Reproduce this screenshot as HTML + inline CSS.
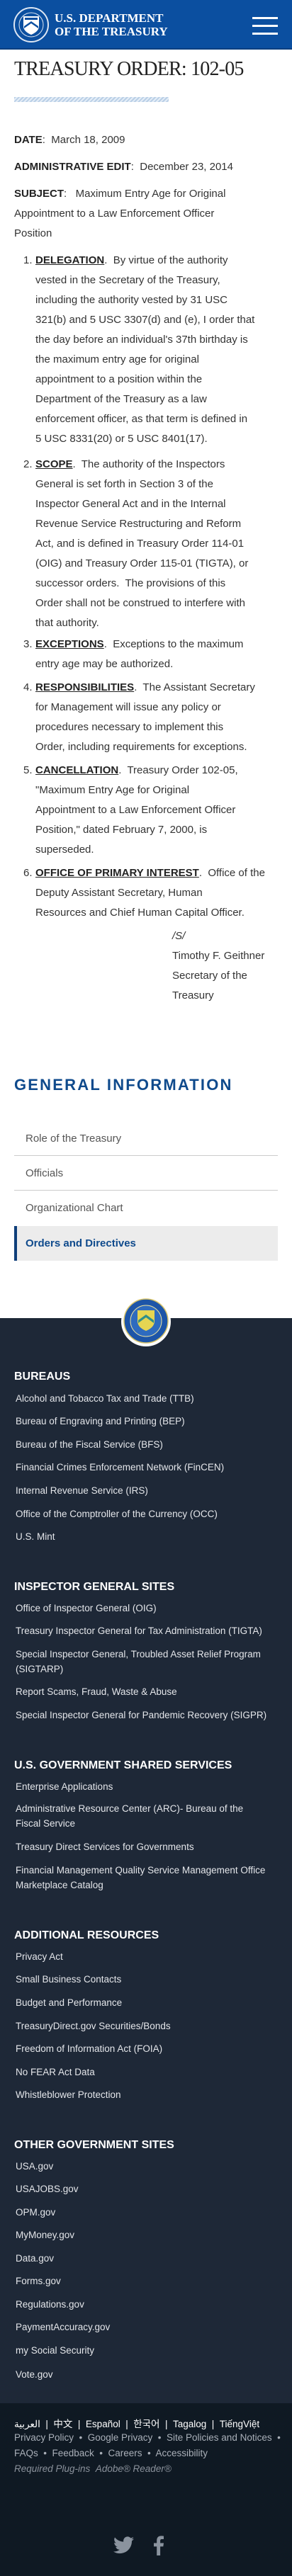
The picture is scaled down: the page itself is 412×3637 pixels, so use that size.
<!DOCTYPE html>
<html><head><meta charset="utf-8">
<style>
*{margin:0;padding:0;box-sizing:border-box}
body{width:412px;height:3637px;position:relative;background:#fff;font-family:"Liberation Sans",sans-serif;color:#333;overflow:hidden}
.abs{position:absolute}
#hdr{left:0;top:0;width:412px;height:70px;background:#0b4fa0;border-bottom:2px solid #0a3f80}
.ht{left:77px;font-family:"Liberation Serif",serif;font-weight:bold;color:#fff;font-size:17px;line-height:18px;white-space:nowrap}
.bar{left:356px;width:36px;height:3px;background:#fff}
h1{position:absolute;left:20px;top:82px;font-family:"Liberation Serif",serif;font-weight:normal;font-size:28px;color:#222;letter-spacing:-0.8px;white-space:nowrap}
.stripe{left:20px;top:137px;width:218px;height:7px;background:repeating-linear-gradient(135deg,#b9cfe6 0 2px,#e4edf7 2px 4px)}
.p{left:20px;font-size:15px;line-height:28px;color:#333;white-space:nowrap}
.p b{color:#222}
.li{left:50px;font-size:15px;line-height:28px;white-space:nowrap;color:#333}
.li .n{position:absolute;left:-17px}
.li u{font-weight:bold;color:#222}
.gi{left:20px;top:1519px;font-size:22px;font-weight:bold;color:#0f4a8c;letter-spacing:2.2px;white-space:nowrap}
.nav{left:20px;width:372px;height:49px;border-bottom:1px solid #ccc;font-size:15px;color:#555;padding-left:16px;line-height:49px}
#foot{left:0;top:1861px;width:412px;height:1532px;background:#1e2837}
#foot2{left:0;top:3393px;width:412px;height:244px;background:#0f1923}
.fh{left:20px;font-size:16px;font-weight:bold;color:#fff;white-space:nowrap}
.fl{left:22px;font-size:13.5px;color:#e4e6ea;white-space:nowrap;line-height:21px}
.sm{left:20px;font-size:13.5px;color:#a9afb8;white-space:nowrap}
</style></head><body>
<div id="hdr" class="abs">
<svg class="abs" style="left:18px;top:9px" width="52" height="52" viewBox="0 0 52 52"><circle cx="26" cy="26" r="24" fill="#0b4fa0" stroke="#dde6f3" stroke-width="2"/><circle cx="26" cy="26" r="17" fill="none" stroke="#dde6f3" stroke-width="1"/><path d="M15 14h22v14c0 6-6 10-11 12-5-2-11-6-11-12z" fill="#fff"/><path d="M16 28l10-7 10 7v3l-10-7-10 7z" fill="#0b4fa0"/><rect x="17" y="16" width="18" height="3" fill="#0b4fa0"/></svg>
<div class="abs ht" style="top:17px">U.S. DEPARTMENT</div>
<div class="abs ht" style="top:36px">OF THE TREASURY</div>
<div class="abs bar" style="top:24px"></div><div class="abs bar" style="top:35px"></div><div class="abs bar" style="top:46px"></div>
</div>
<h1>TREASURY ORDER: 102-05</h1>
<div class="abs stripe"></div>
<div class="abs p" style="top:184px"><b>DATE</b>:&nbsp; March 18, 2009</div>
<div class="abs p" style="top:222px"><b>ADMINISTRATIVE EDIT</b>:&nbsp; December 23, 2014</div>
<div class="abs p" style="top:260px"><b>SUBJECT</b>:&nbsp;&nbsp; Maximum Entry Age for Original<br>Appointment to a Law Enforcement Officer<br>Position</div>
<div class="abs li" style="top:354px"><span class="n">1.</span><u>DELEGATION</u>.&nbsp; By virtue of the authority<br>vested in the Secretary of the Treasury,<br>including the authority vested by 31 USC<br>321(b) and 5 USC 3307(d) and (e), I order that<br>the day before an individual's 37th birthday is<br>the maximum entry age for original<br>appointment to a position within the<br>Department of the Treasury as a law<br>enforcement officer, as that term is defined in<br>5 USC 8331(20) or 5 USC 8401(17).</div>
<div class="abs li" style="top:642px"><span class="n">2.</span><u>SCOPE</u>.&nbsp; The authority of the Inspectors<br>General is set forth in Section 3 of the<br>Inspector General Act and in the Internal<br>Revenue Service Restructuring and Reform<br>Act, and is defined in Treasury Order 114-01<br>(OIG) and Treasury Order 115-01 (TIGTA), or<br>successor orders.&nbsp; The provisions of this<br>Order shall not be construed to interfere with<br>that authority.</div>
<div class="abs li" style="top:896px"><span class="n">3.</span><u>EXCEPTIONS</u>.&nbsp; Exceptions to the maximum<br>entry age may be authorized.</div>
<div class="abs li" style="top:957px"><span class="n">4.</span><u>RESPONSIBILITIES</u>.&nbsp; The Assistant Secretary<br>for Management will issue any policy or<br>procedures necessary to implement this<br>Order, including requirements for exceptions.</div>
<div class="abs li" style="top:1074px"><span class="n">5.</span><u>CANCELLATION</u>.&nbsp; Treasury Order 102-05,<br>"Maximum Entry Age for Original<br>Appointment to a Law Enforcement Officer<br>Position," dated February 7, 2000, is<br>superseded.</div>
<div class="abs li" style="top:1219px"><span class="n">6.</span><u>OFFICE OF PRIMARY INTEREST</u>.&nbsp; Office of the<br>Deputy Assistant Secretary, Human<br>Resources and Chief Human Capital Officer.</div>
<div class="abs li" style="top:1308px;left:243px"><i>/S/</i><br>Timothy F. Geithner<br>Secretary of the<br>Treasury</div>
<div class="abs gi">GENERAL INFORMATION</div>
<div class="abs nav" style="top:1583px">Role of the Treasury</div>
<div class="abs nav" style="top:1632px">Officials</div>
<div class="abs nav" style="top:1681px;border-bottom:none">Organizational Chart</div>
<div class="abs nav" style="top:1731px;height:49px;background:#ececec;border-left:4px solid #0f3f7a;border-bottom:none;padding-left:12px;font-weight:bold;color:#0f4a8c">Orders and Directives</div>
<div id="foot" class="abs"></div>
<svg class="abs" style="left:170px;top:1830px" width="72" height="72" viewBox="0 0 72 72"><circle cx="36" cy="36" r="35" fill="#fff"/><circle cx="36" cy="35" r="31" fill="#1d55a8" stroke="#d8c46a" stroke-width="1.5"/><circle cx="36" cy="35" r="22" fill="#2e6bbf" stroke="#e9e0a0" stroke-width="1"/><path d="M24 20h24v15c0 8-7 12-12 14-5-2-12-6-12-14z" fill="#e6d552"/><path d="M25 34l11-8 11 8v4l-11-8-11 8z" fill="#2f8f8a"/></svg>
<div class="abs fh" style="top:1935px">BUREAUS</div>
<div class="abs fl" style="top:1964px">Alcohol and Tobacco Tax and Trade (TTB)</div>
<div class="abs fl" style="top:1996px">Bureau of Engraving and Printing (BEP)</div>
<div class="abs fl" style="top:2029px">Bureau of the Fiscal Service (BFS)</div>
<div class="abs fl" style="top:2061px">Financial Crimes Enforcement Network (FinCEN)</div>
<div class="abs fl" style="top:2094px">Internal Revenue Service (IRS)</div>
<div class="abs fl" style="top:2127px">Office of the Comptroller of the Currency (OCC)</div>
<div class="abs fl" style="top:2159px">U.S. Mint</div>
<div class="abs fh" style="top:2232px">INSPECTOR GENERAL SITES</div>
<div class="abs fl" style="top:2260px">Office of Inspector General (OIG)</div>
<div class="abs fl" style="top:2292px">Treasury Inspector General for Tax Administration (TIGTA)</div>
<div class="abs fl" style="top:2325px">Special Inspector General, Troubled Asset Relief Program<br>(SIGTARP)</div>
<div class="abs fl" style="top:2378px">Report Scams, Fraud, Waste &amp; Abuse</div>
<div class="abs fl" style="top:2411px">Special Inspector General for Pandemic Recovery (SIGPR)</div>
<div class="abs fh" style="top:2484px">U.S. GOVERNMENT SHARED SERVICES</div>
<div class="abs fl" style="top:2512px">Enterprise Applications</div>
<div class="abs fl" style="top:2543px">Administrative Resource Center (ARC)- Bureau of the<br>Fiscal Service</div>
<div class="abs fl" style="top:2597px">Treasury Direct Services for Governments</div>
<div class="abs fl" style="top:2630px">Financial Management Quality Service Management Office<br>Marketplace Catalog</div>
<div class="abs fh" style="top:2724px">ADDITIONAL RESOURCES</div>
<div class="abs fl" style="top:2752px">Privacy Act</div>
<div class="abs fl" style="top:2784px">Small Business Contacts</div>
<div class="abs fl" style="top:2817px">Budget and Performance</div>
<div class="abs fl" style="top:2850px">TreasuryDirect.gov Securities/Bonds</div>
<div class="abs fl" style="top:2882px">Freedom of Information Act (FOIA)</div>
<div class="abs fl" style="top:2915px">No FEAR Act Data</div>
<div class="abs fl" style="top:2947px">Whistleblower Protection</div>
<div class="abs fh" style="top:3020px">OTHER GOVERNMENT SITES</div>
<div class="abs fl" style="top:3048px">USA.gov</div>
<div class="abs fl" style="top:3080px">USAJOBS.gov</div>
<div class="abs fl" style="top:3113px">OPM.gov</div>
<div class="abs fl" style="top:3145px">MyMoney.gov</div>
<div class="abs fl" style="top:3178px">Data.gov</div>
<div class="abs fl" style="top:3210px">Forms.gov</div>
<div class="abs fl" style="top:3243px">Regulations.gov</div>
<div class="abs fl" style="top:3275px">PaymentAccuracy.gov</div>
<div class="abs fl" style="top:3308px">my Social Security</div>
<div class="abs fl" style="top:3342px">Vote.gov</div>
<div id="foot2" class="abs"></div>
<div class="abs sm" style="top:3411px;color:#fff;font-family:'Liberation Sans','Noto Sans CJK SC',sans-serif">العربية&nbsp; | &nbsp;中文&nbsp; | &nbsp;Español&nbsp; | &nbsp;한국어&nbsp; | &nbsp;Tagalog&nbsp; | &nbsp;TiếngViệt</div>
<div class="abs sm" style="top:3434px">Privacy Policy &nbsp;•&nbsp; Google Privacy &nbsp;•&nbsp; Site Policies and Notices &nbsp;•</div>
<div class="abs sm" style="top:3456px">FAQs &nbsp;•&nbsp; Feedback &nbsp;•&nbsp; Careers &nbsp;•&nbsp; Accessibility</div>
<div class="abs sm" style="top:3478px;font-style:italic;color:#8a919b">Required Plug-ins &nbsp;Adobe® Reader®</div>
<svg class="abs" style="left:160px;top:3581px" width="29" height="25" viewBox="0 0 24 20"><path d="M24 2.4c-.9.4-1.8.6-2.8.8 1-.6 1.8-1.6 2.2-2.7-1 .6-2 1-3.1 1.2C19.3.7 18 0 16.6 0c-2.7 0-4.9 2.2-4.9 4.9 0 .4 0 .8.1 1.1C7.7 5.8 4.1 3.9 1.7.9c-.4.7-.7 1.6-.7 2.5 0 1.7.9 3.2 2.2 4.1-.8 0-1.6-.2-2.2-.6v.1c0 2.4 1.7 4.4 3.9 4.8-.4.1-.8.2-1.3.2-.3 0-.6 0-.9-.1.6 2 2.4 3.4 4.6 3.4-1.7 1.3-3.8 2.1-6.1 2.1H0c2.2 1.4 4.8 2.2 7.5 2.2 9.1 0 14-7.5 14-14v-.6c1-.7 1.8-1.6 2.5-2.5z" fill="#8a939e"/></svg>
<svg class="abs" style="left:217px;top:3580px" width="14" height="28" viewBox="0 0 10 20"><path d="M6.5 20V11h3l.5-3.5H6.5V5.3c0-1 .3-1.7 1.7-1.7H10V.5C9.7.4 8.6.3 7.4.3 4.8.3 3 1.9 3 4.8v2.7H0V11h3v9z" fill="#8a939e"/></svg>
</body></html>
